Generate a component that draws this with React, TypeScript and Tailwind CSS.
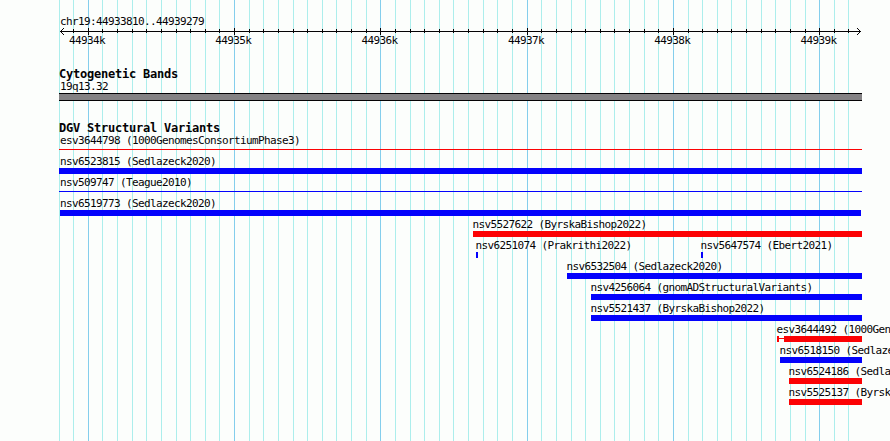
import React from 'react';
import { clsx } from 'clsx';

interface Feature {
  name: string;
  start: number;
  end?: number;
  color: 'red' | 'blue';
  shape?: 'bar' | 'line' | 'partial';
}

const REGION_START = 44933810;
const REGION_END = 44939279;
const PAD = 60;
const TRACK_WIDTH = 800;

const toX = (bp: number) =>
  Math.round(PAD + ((bp - REGION_START) / (REGION_END - REGION_START)) * TRACK_WIDTH);

// one tick every 100 bp, every tenth one is labelled
const ticks = Array.from({ length: 55 }, (_, i) => {
  const bp = 44933800 + i * 100;
  return { bp, x: toX(bp), major: bp % 1000 === 0 };
});

const rows: Feature[][] = [
  [{ name: 'esv3644798 (1000GenomesConsortiumPhase3)', start: 59, color: 'red', shape: 'line' }],
  [{ name: 'nsv6523815 (Sedlazeck2020)', start: 59, color: 'blue' }],
  [{ name: 'nsv509747 (Teague2010)', start: 59, color: 'blue', shape: 'line' }],
  [{ name: 'nsv6519773 (Sedlazeck2020)', start: 60, end: 861, color: 'blue' }],
  [{ name: 'nsv5527622 (ByrskaBishop2022)', start: 473, color: 'red' }],
  [
    { name: 'nsv6251074 (Prakrithi2022)', start: 476, end: 478, color: 'blue' },
    { name: 'nsv5647574 (Ebert2021)', start: 701, end: 703, color: 'blue' },
  ],
  [{ name: 'nsv6532504 (Sedlazeck2020)', start: 567, color: 'blue' }],
  [{ name: 'nsv4256064 (gnomADStructuralVariants)', start: 591, color: 'blue' }],
  [{ name: 'nsv5521437 (ByrskaBishop2022)', start: 591, color: 'blue' }],
  [{ name: 'esv3644492 (1000GenomesConsortiumPhase3)', start: 777, color: 'red', shape: 'partial' }],
  [{ name: 'nsv6518150 (Sedlazeck2020)', start: 780, color: 'blue' }],
  [{ name: 'nsv6524186 (Sedlazeck2020)', start: 789, color: 'red' }],
  [{ name: 'nsv5525137 (ByrskaBishop2022)', start: 789, color: 'red' }],
];

const Label: React.FC<{ children: React.ReactNode }> = ({ children }) => (
  <div className="h-[15px] pt-[2px] text-[11px] leading-[14px] tracking-[-0.622px] whitespace-nowrap">
    {children}
  </div>
);

const TrackTitle: React.FC<{ children: React.ReactNode }> = ({ children }) => (
  <h2 className="h-[15px] pt-px pl-[59px] text-[12px] leading-[15px] font-bold tracking-[-0.224px] whitespace-nowrap">
    {children}
  </h2>
);

const Gridlines = () => (
  <svg className="absolute inset-0" width="890" height="441" shapeRendering="crispEdges">
    {ticks.map((t) => (
      <rect key={t.bp} x={t.x} y="0" width="1" height="441" fill={t.major ? '#84ceec' : '#aceeec'} />
    ))}
  </svg>
);

const Ruler = () => (
  <svg className="block" width="890" height="9" shapeRendering="crispEdges" fill="#040204">
    <rect x="60" y="4" width="801" height="1" />
    {ticks.slice(1).map((t) => (
      <rect key={t.bp} x={t.x} y={t.major ? 1 : 2} width="1" height={t.major ? 7 : 4} />
    ))}
    <path d="M61 3h1v1h-1zM62 2h1v1h-1zM63 1h1v1h-1zM61 5h1v1h-1zM62 6h1v1h-1zM63 7h1v1h-1z" />
    <path d="M859 3h1v1h-1zM858 2h1v1h-1zM857 1h1v1h-1zM859 5h1v1h-1zM858 6h1v1h-1zM857 7h1v1h-1z" />
  </svg>
);

const FeatureGlyph: React.FC<{ feature: Feature }> = ({ feature }) => {
  const { name, start, end = 862, color, shape = 'bar' } = feature;
  const fill = color === 'red' ? 'bg-[#fc0204]' : 'bg-[#0402fc]';

  return (
    <div className="col-start-1 row-start-1" style={{ marginLeft: start }}>
      <div className={clsx(start === 59 && 'pl-px', start > 60 && '-ml-[0.5px]')}>
        <Label>{name}</Label>
      </div>
      <div className="flex h-[6px]" style={{ width: end - start }}>
        {shape === 'partial' && (
          <>
            <div className={clsx('h-[6px] w-[2px]', fill)} />
            <div className={clsx('mt-[2px] h-px w-[5px]', fill)} />
          </>
        )}
        <div className={clsx('grow', shape === 'line' ? 'mt-[2px] h-px' : 'h-[6px]', fill)} />
      </div>
    </div>
  );
};

export default function App() {
  return (
    <main className="relative h-[441px] w-[890px] overflow-hidden bg-[#fcfefc] font-['DejaVu_Sans_Mono',monospace] text-[#040204]">
      <Gridlines />
      <div className="relative pt-[13px]">
        <div className="h-[14px] pl-[60px]">
          <Label>chr19:44933810..44939279</Label>
        </div>
        <Ruler />
        <div className="flex h-[15px] -mt-[4px] gap-[110.3px] pl-[69px]">
          {ticks.filter((t) => t.major).map((t) => (
            <div key={t.bp} className="w-[36px] shrink-0">
              <Label>{t.bp / 1000}k</Label>
            </div>
          ))}
        </div>

        <section className="mt-[19px] h-[35px]">
          <TrackTitle>Cytogenetic Bands</TrackTitle>
          <div className="-mt-[3px] pl-[60px]">
            <Label>19q13.32</Label>
          </div>
          <div className="ml-[59px] h-[8px] w-[803px] border-y border-[#040204] bg-[#848284]" />
        </section>

        <section className="mt-[19px]">
          <TrackTitle>DGV Structural Variants</TrackTitle>
          <div className="-mt-[3px]">
            {rows.map((row) => (
              <div key={row[0].name} className="grid h-[21px] grid-cols-[890px]">
                {row.map((f) => (
                  <FeatureGlyph key={f.name} feature={f} />
                ))}
              </div>
            ))}
          </div>
        </section>
      </div>
    </main>
  );
}
